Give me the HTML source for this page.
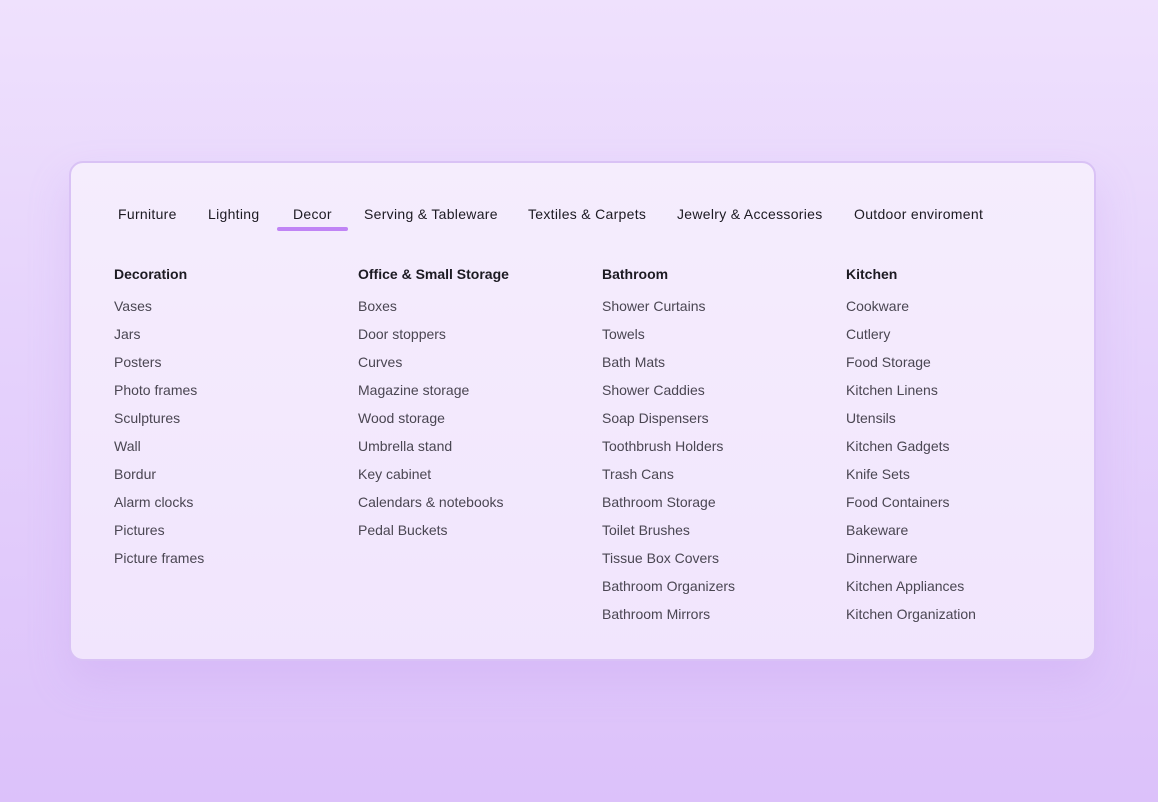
<!DOCTYPE html>
<html><head><style>
*{margin:0;padding:0;box-sizing:border-box}
body{width:1158px;height:802px;overflow:hidden;background:linear-gradient(180deg,#efe1fd 0%,#e6d3fc 40%,#dcc1fa 100%);font-family:"Liberation Sans",sans-serif;position:relative}
.card{position:absolute;left:69px;top:161px;width:1027px;height:500px;border:2px solid #d9c2f5;border-radius:14px;background:linear-gradient(180deg,#f5edfd,#f1e5fd);box-shadow:0 20px 40px rgba(190,150,240,.25)}
.tab{position:absolute;top:206px;font-size:14px;color:#1c1a22;line-height:16px;letter-spacing:0.3px}
.ul{position:absolute;left:277px;top:227px;width:71px;height:4px;border-radius:2px;background:#c084f5}
.col{position:absolute;top:266px;font-size:14px}
.col h4{font-weight:bold;color:#1c1a22;line-height:16px;margin-bottom:16px;font-size:14px}
.col div{color:#4a4652;line-height:16px;height:28px}
</style></head><body>
<div class="card"></div>
<div class="tab" style="left:118px">Furniture</div>
<div class="tab" style="left:208px">Lighting</div>
<div class="tab" style="left:293px">Decor</div>
<div class="tab" style="left:364px">Serving &amp; Tableware</div>
<div class="tab" style="left:528px">Textiles &amp; Carpets</div>
<div class="tab" style="left:677px">Jewelry &amp; Accessories</div>
<div class="tab" style="left:854px">Outdoor enviroment</div>
<div class="ul"></div>
<div class="col" style="left:114px"><h4>Decoration</h4><div>Vases</div><div>Jars</div><div>Posters</div><div>Photo frames</div><div>Sculptures</div><div>Wall</div><div>Bordur</div><div>Alarm clocks</div><div>Pictures</div><div>Picture frames</div></div>
<div class="col" style="left:358px"><h4>Office &amp; Small Storage</h4><div>Boxes</div><div>Door stoppers</div><div>Curves</div><div>Magazine storage</div><div>Wood storage</div><div>Umbrella stand</div><div>Key cabinet</div><div>Calendars &amp; notebooks</div><div>Pedal Buckets</div></div>
<div class="col" style="left:602px"><h4>Bathroom</h4><div>Shower Curtains</div><div>Towels</div><div>Bath Mats</div><div>Shower Caddies</div><div>Soap Dispensers</div><div>Toothbrush Holders</div><div>Trash Cans</div><div>Bathroom Storage</div><div>Toilet Brushes</div><div>Tissue Box Covers</div><div>Bathroom Organizers</div><div>Bathroom Mirrors</div></div>
<div class="col" style="left:846px"><h4>Kitchen</h4><div>Cookware</div><div>Cutlery</div><div>Food Storage</div><div>Kitchen Linens</div><div>Utensils</div><div>Kitchen Gadgets</div><div>Knife Sets</div><div>Food Containers</div><div>Bakeware</div><div>Dinnerware</div><div>Kitchen Appliances</div><div>Kitchen Organization</div></div>
</body></html>
